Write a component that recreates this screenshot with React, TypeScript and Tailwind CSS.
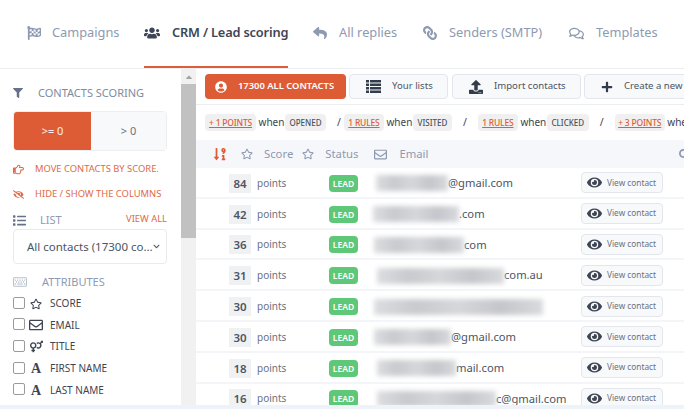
import React from 'react';
import {
  FaFlagCheckered, FaUsers, FaReply, FaLink, FaRegComments, FaFilter, FaUserCircle, FaUpload, FaPlus,
  FaRegHandPointRight, FaEyeSlash, FaList, FaRegKeyboard, FaRegStar, FaRegEnvelope, FaVenusMars, FaEye,
  FaSortNumericDownAlt, FaChevronDown, FaSearch, FaCaretUp, FaEllipsisV,
} from 'react-icons/fa';

const rows = [
  { score: 84, blurW: 72, blurL: 0, tail: '@gmail.com' },
  { score: 42, blurW: 86, blurL: -3, tail: '.com' },
  { score: 36, blurW: 90, blurL: -2, tail: 'com' },
  { score: 31, blurW: 127, blurL: 1, tail: 'com.au' },
  { score: 30, blurW: 169, blurL: -2, tail: '' },
  { score: 30, blurW: 77, blurL: -2, tail: '@gmail.com' },
  { score: 18, blurW: 79, blurL: 1, tail: 'mail.com' },
  { score: 16, blurW: 119, blurL: 1, tail: 'c@gmail.com' },
];

const serifA = <span className="font-['Liberation_Serif',serif] font-bold text-[14px]">A</span>;

const attrs = [
  { icon: <FaRegStar className="text-[12px]" />, label: 'SCORE' },
  { icon: <FaRegEnvelope className="text-[14px]" />, label: 'EMAIL' },
  { icon: <FaVenusMars className="text-[13px]" />, label: 'TITLE' },
  { icon: serifA, label: 'FIRST NAME' },
  { icon: serifA, label: 'LAST NAME' },
];

const ListRows = () => (
  <svg viewBox="0 0 15 13" className="w-[15px] h-[13px] mr-[11px] shrink-0 fill-[#333c4b]">
    <path d="M0 0h3v2.5H0zM4 0h11v2.5H4zM0 3.5h3V6H0zM4 3.5h11V6H4zM0 7h3v2.5H0zM4 7h11v2.5H4zM0 10.5h3V13H0zM4 10.5h11V13H4z" />
  </svg>
);

const Rule: React.FC<{ points: string; on: string; pw: string; ow: string }> = ({ points, on, pw, ow }) => (
  <div className="flex items-center shrink-0">
    <span className={`${pw} text-center bg-[#f0f0f0] rounded h-[17px] leading-[17px] text-[8.5px] tracking-[-0.2px] font-medium text-[#de5c36] underline whitespace-nowrap`}>{points}</span>
    <span className="ml-[2px] w-[27px] text-center text-[10px] text-[#3d4452]">when</span>
    <span className={`${ow} text-center bg-[#f0f0f0] rounded h-[17px] leading-[17px] text-[8px] font-medium text-[#4b5260] whitespace-nowrap`}>{on}</span>
  </div>
);

const NavItem: React.FC<{ icon: React.ReactNode; label: string; active?: boolean; className?: string }> = ({ icon, label, active, className }) => (
  <div className={`flex items-center h-full shrink-0 border-b-2 ${active ? 'border-[#de5c36] text-[#3d4657] font-semibold' : 'border-transparent text-[#8e9ab2]'} ${className ?? ''}`}>
    {icon}
    <span className="whitespace-nowrap">{label}</span>
  </div>
);

export default function App() {
  return (
    <div className="w-[684px] h-[409px] overflow-hidden bg-white flex flex-col font-['Noto_Sans',sans-serif]">
      <div className="h-[69px] shrink-0 flex border-b border-[#eceef2] pl-[27px] text-[12.8px]">
        <NavItem icon={<FaFlagCheckered className="text-[14px] mr-[11px] shrink-0" />} label="Campaigns" className="w-[117px]" />
        <NavItem active icon={<FaUsers className="text-[16px] mr-[12px] shrink-0" />} label="CRM / Lead scoring" className="w-[144px] tracking-[-0.17px]" />
        <NavItem icon={<FaReply className="text-[14px] mr-[12px] shrink-0" />} label="All replies" className="ml-[25px] w-[110px]" />
        <NavItem icon={<FaLink className="text-[14px] mr-[12px] shrink-0 -scale-x-100" />} label="Senders (SMTP)" className="w-[146px]" />
        <NavItem icon={<FaRegComments className="text-[15px] mr-[12px] shrink-0" />} label="Templates" className="w-[113px]" />
        <NavItem icon={<FaEllipsisV className="text-[12px] shrink-0" />} label="" />
      </div>

      <div className="flex-1 flex min-h-0">
        {/* sidebar */}
        <div className="w-[181px] shrink-0 pl-[13px] pr-[14px] overflow-hidden">
          <div className="mt-[15px] h-[18px] flex items-center text-[#7e8ba3]">
            <FaFilter className="text-[10px] text-[#66728a] shrink-0" />
            <span className="ml-[15px] text-[11px] whitespace-nowrap">CONTACTS SCORING</span>
          </div>
          <div className="mt-[9px] h-[40px] flex rounded border border-[#eceef2] overflow-hidden text-[11px]">
            <div className="w-[77px] bg-[#dd5c36] text-white/90 flex items-center justify-center">&gt;= 0</div>
            <div className="flex-1 bg-[#f8f9fb] text-[#6b7280] flex items-center justify-center">&gt; 0</div>
          </div>
          <div className="mt-[10px] h-[16px] flex items-center text-[#de6a47] text-[9.4px] whitespace-nowrap">
            <FaRegHandPointRight className="text-[11px] mr-[11px] shrink-0" />MOVE CONTACTS BY SCORE.
          </div>
          <div className="mt-[9px] h-[16px] flex items-center text-[#de6a47] text-[9.4px] whitespace-nowrap">
            <FaEyeSlash className="text-[11px] mr-[11px] shrink-0" />HIDE / SHOW THE COLUMNS
          </div>
          <div className="mt-[10px] h-[16px] flex items-center">
            <FaList className="text-[13px] text-[#66728a] shrink-0" />
            <span className="ml-[14px] text-[11px] text-[#8e9ab2]">LIST</span>
            <span className="ml-auto text-[9.4px] text-[#de6a47] -mt-[2px]">VIEW ALL</span>
          </div>
          <div className="mt-[1px] h-[35px] flex items-center border border-[#e8eaee] rounded pl-[13px] pr-[8px] text-[11.5px] text-[#4b5563]">
            <span className="whitespace-nowrap">All contacts (17300 co…</span>
            <FaChevronDown className="text-[7px] ml-auto shrink-0" />
          </div>
          <div className="mt-[9px] h-[18px] flex items-center">
            <FaRegKeyboard className="text-[14px] text-[#b8c0cc] shrink-0" />
            <span className="ml-[15px] text-[11px] text-[#8e9ab2]">ATTRIBUTES</span>
          </div>
          <div className="mt-[2px] flex flex-col">
            {attrs.map(a => (
              <div key={a.label} className="h-[21.6px] shrink-0 flex items-center text-[#3d4452]">
                <span className="w-[12px] h-[12px] -mt-[2px] border border-[#9a9a9a] rounded-[2px] bg-white shrink-0 mr-[4px]" />
                <span className="w-[14px] flex justify-center shrink-0">{a.icon}</span>
                <span className="ml-[7px] text-[10px] whitespace-nowrap">{a.label}</span>
              </div>
            ))}
            <span className="mt-[4px] w-[12px] h-[12px] border border-[#9a9a9a] rounded-[2px] bg-white shrink-0" />
          </div>
        </div>

        {/* page scrollbar */}
        <div className="w-[15px] shrink-0 bg-[#f1f1f1] flex flex-col items-center">
          <FaCaretUp className="text-[10px] text-[#a3a3a3] mt-[3px] mb-[2px]" />
          <div className="w-full h-[154px] bg-[#c1c1c1]" />
        </div>

        {/* main */}
        <div className="flex-1 min-w-0 overflow-hidden flex flex-col">
          <div className="h-[36px] shrink-0 flex items-center pl-[9px] border-b border-[#eceef2]">
            <div className="w-[141px] h-[25px] shrink-0 rounded bg-[#dd5c36] text-white flex items-center pl-[10px] text-[9.4px] font-semibold whitespace-nowrap">
              <FaUserCircle className="text-[12px] mr-[11px] shrink-0" />17300 ALL CONTACTS
            </div>
            <div className="ml-[3px] w-[99px] h-[25px] shrink-0 rounded border border-[#e3e6ec] bg-[#f8f9fb] flex items-center pl-[16px] text-[9.6px] text-[#4b5563] whitespace-nowrap">
              <ListRows />Your lists
            </div>
            <div className="ml-[4px] w-[129px] h-[25px] shrink-0 rounded border border-[#e3e6ec] bg-[#f8f9fb] flex items-center pl-[16px] text-[9.6px] text-[#4b5563] whitespace-nowrap">
              <FaUpload className="text-[14px] text-[#333c4b] mr-[11px] shrink-0" />Import contacts
            </div>
            <div className="ml-[3px] w-[130px] h-[25px] shrink-0 rounded border border-[#e3e6ec] bg-[#f8f9fb] flex items-center pl-[16px] text-[9.6px] text-[#4b5563] whitespace-nowrap">
              <FaPlus className="text-[12px] text-[#333c4b] mr-[11px] shrink-0" />Create a new contact
            </div>
          </div>
          <div className="h-[35px] shrink-0 flex items-center pl-[9px] text-[10.5px] text-[#3d4452]">
            <Rule points="+ 1 POINTS" on="OPENED" pw="w-[51px]" ow="w-[41px]" />
            <span className="ml-[11px] mr-[3px]">/</span>
            <Rule points="1 RULES" on="VISITED" pw="w-[40px]" ow="w-[39px]" />
            <span className="ml-[11px] mr-[11px]">/</span>
            <Rule points="1 RULES" on="CLICKED" pw="w-[40px]" ow="w-[42px]" />
            <span className="ml-[11px] mr-[11px]">/</span>
            <Rule points="+ 3 POINTS" on="REPLIED" pw="w-[50px]" ow="w-[41px]" />
          </div>
          <div className="h-[28px] shrink-0 bg-[#f6f7fa] flex items-center text-[11.3px] text-[#8e9ab2]">
            <FaSortNumericDownAlt className="ml-[17px] text-[14px] text-[#de5c36] shrink-0" />
            <FaRegStar className="ml-[14px] text-[12px] shrink-0" />
            <span className="ml-[11px]">Score</span>
            <FaRegStar className="ml-[9px] text-[12px] shrink-0" />
            <span className="ml-[11px]">Status</span>
            <FaRegEnvelope className="ml-[16px] text-[13px] shrink-0" />
            <span className="ml-[12px]">Email</span>
            <FaSearch className="ml-auto -mr-[6px] text-[11px] shrink-0" />
          </div>
          {rows.map((r, i) => (
            <div key={i} className="h-[30.8px] shrink-0 flex items-center pt-[2px] border-b-2 border-[#f4f5f8]">
              <span className="ml-[33px] w-[22px] h-[19px] leading-[19px] shrink-0 bg-[#f0f1f3] text-center text-[11.5px] font-semibold text-[#4b5563]">{r.score}</span>
              <span className="ml-[6px] w-[72px] shrink-0 text-[10px] text-[#6b7280]">points</span>
              <span className="w-[29px] h-[17px] leading-[17px] shrink-0 rounded bg-[#5fc878] text-white text-center text-[8.5px] font-semibold">LEAD</span>
              <div className="w-[223px] shrink-0 flex items-center pl-[18px] text-[11.2px] text-[#4b5563] whitespace-nowrap">
                <span className="h-[16px] bg-[linear-gradient(90deg,#dcdde0,#c8cace,#d6d7da,#c5c6cb,#d9dadd)] blur-[2.5px] shrink-0" style={{ width: r.blurW, marginLeft: r.blurL }} />
                <span>{r.tail}</span>
              </div>
              <div className="w-[82px] h-[21px] -mt-[1px] shrink-0 rounded border border-[#e3e6ec] bg-[#f8f9fb] flex items-center pl-[5px] text-[8.3px] text-[#6b7280] whitespace-nowrap">
                <FaEye className="text-[15px] text-[#3d4452] mr-[5px] shrink-0" />View contact
              </div>
            </div>
          ))}
        </div>
      </div>
      <div className="h-[4px] shrink-0 bg-[#eef2f9]" />
    </div>
  );
}
